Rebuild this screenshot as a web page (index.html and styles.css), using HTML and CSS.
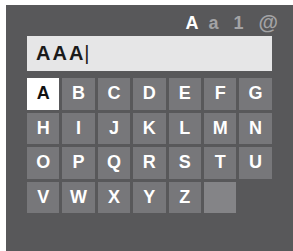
FILE: index.html
```html
<!DOCTYPE html>
<html>
<head>
<meta charset="utf-8">
<link rel="stylesheet" href="styles.css">
</head>
<body>
<div class="panel">
  <div class="modes">
    <span class="mode mode-on">A</span>
    <span class="mode mode-a">a</span>
    <span class="mode mode-1">1</span>
    <span class="mode mode-at">@</span>
  </div>
  <div class="field">AAA<span class="caret">|</span></div>
  <div class="keys">
    <div class="key key-on">A</div>
    <div class="key">B</div>
    <div class="key">C</div>
    <div class="key">D</div>
    <div class="key">E</div>
    <div class="key">F</div>
    <div class="key">G</div>
    <div class="key">H</div>
    <div class="key">I</div>
    <div class="key">J</div>
    <div class="key">K</div>
    <div class="key">L</div>
    <div class="key">M</div>
    <div class="key">N</div>
    <div class="key">O</div>
    <div class="key">P</div>
    <div class="key">Q</div>
    <div class="key">R</div>
    <div class="key">S</div>
    <div class="key">T</div>
    <div class="key">U</div>
    <div class="key">V</div>
    <div class="key">W</div>
    <div class="key">X</div>
    <div class="key">Y</div>
    <div class="key">Z</div>
    <div class="key key-empty"></div>
  </div>
</div>
</body>
</html>
```
FILE: styles.css
```css
html, body {
  margin: 0;
  padding: 0;
  background: #ffffff;
}
body {
  width: 293px;
  height: 251px;
  overflow: hidden;
  font-family: "Liberation Sans", Arial, sans-serif;
}
.panel {
  margin: 5px 0 0 6px;
  height: 246px;
  background: #58585a;
  padding: 0 0 0 21px;
  box-sizing: border-box;
}
.modes {
  display: flex;
  justify-content: flex-end;
  align-items: baseline;
  width: 251px;
  height: 31px;
  padding-top: 7px;
  box-sizing: border-box;
  font-weight: bold;
  font-size: 18px;
  line-height: 20px;
  color: #a3a3a5;
}
.mode-on { color: #ffffff; }
.mode-a { margin-left: 10px; }
.mode-1 { margin-left: 15px; }
.mode-at { margin-left: 15px; font-size: 20px; }
.field {
  width: 245px;
  height: 35px;
  background: #e6e6e7;
  box-sizing: border-box;
  padding-left: 9px;
  font-weight: bold;
  font-size: 20px;
  line-height: 35px;
  color: #1a1a1a;
  letter-spacing: 2px;
}
.caret {
  font-weight: normal;
  margin-left: -1px;
}
.keys {
  margin-top: 7px;
  display: grid;
  grid-template-columns: repeat(7, 32.4px);
  grid-auto-rows: 31.5px;
  gap: 3px;
}
.key {
  background: #77777a;
  color: #ffffff;
  font-weight: bold;
  font-size: 18px;
  display: flex;
  align-items: center;
  justify-content: center;
}
.key-on {
  background: #ffffff;
  color: #111111;
}
.key-empty {
  background: #848487;
}
```
